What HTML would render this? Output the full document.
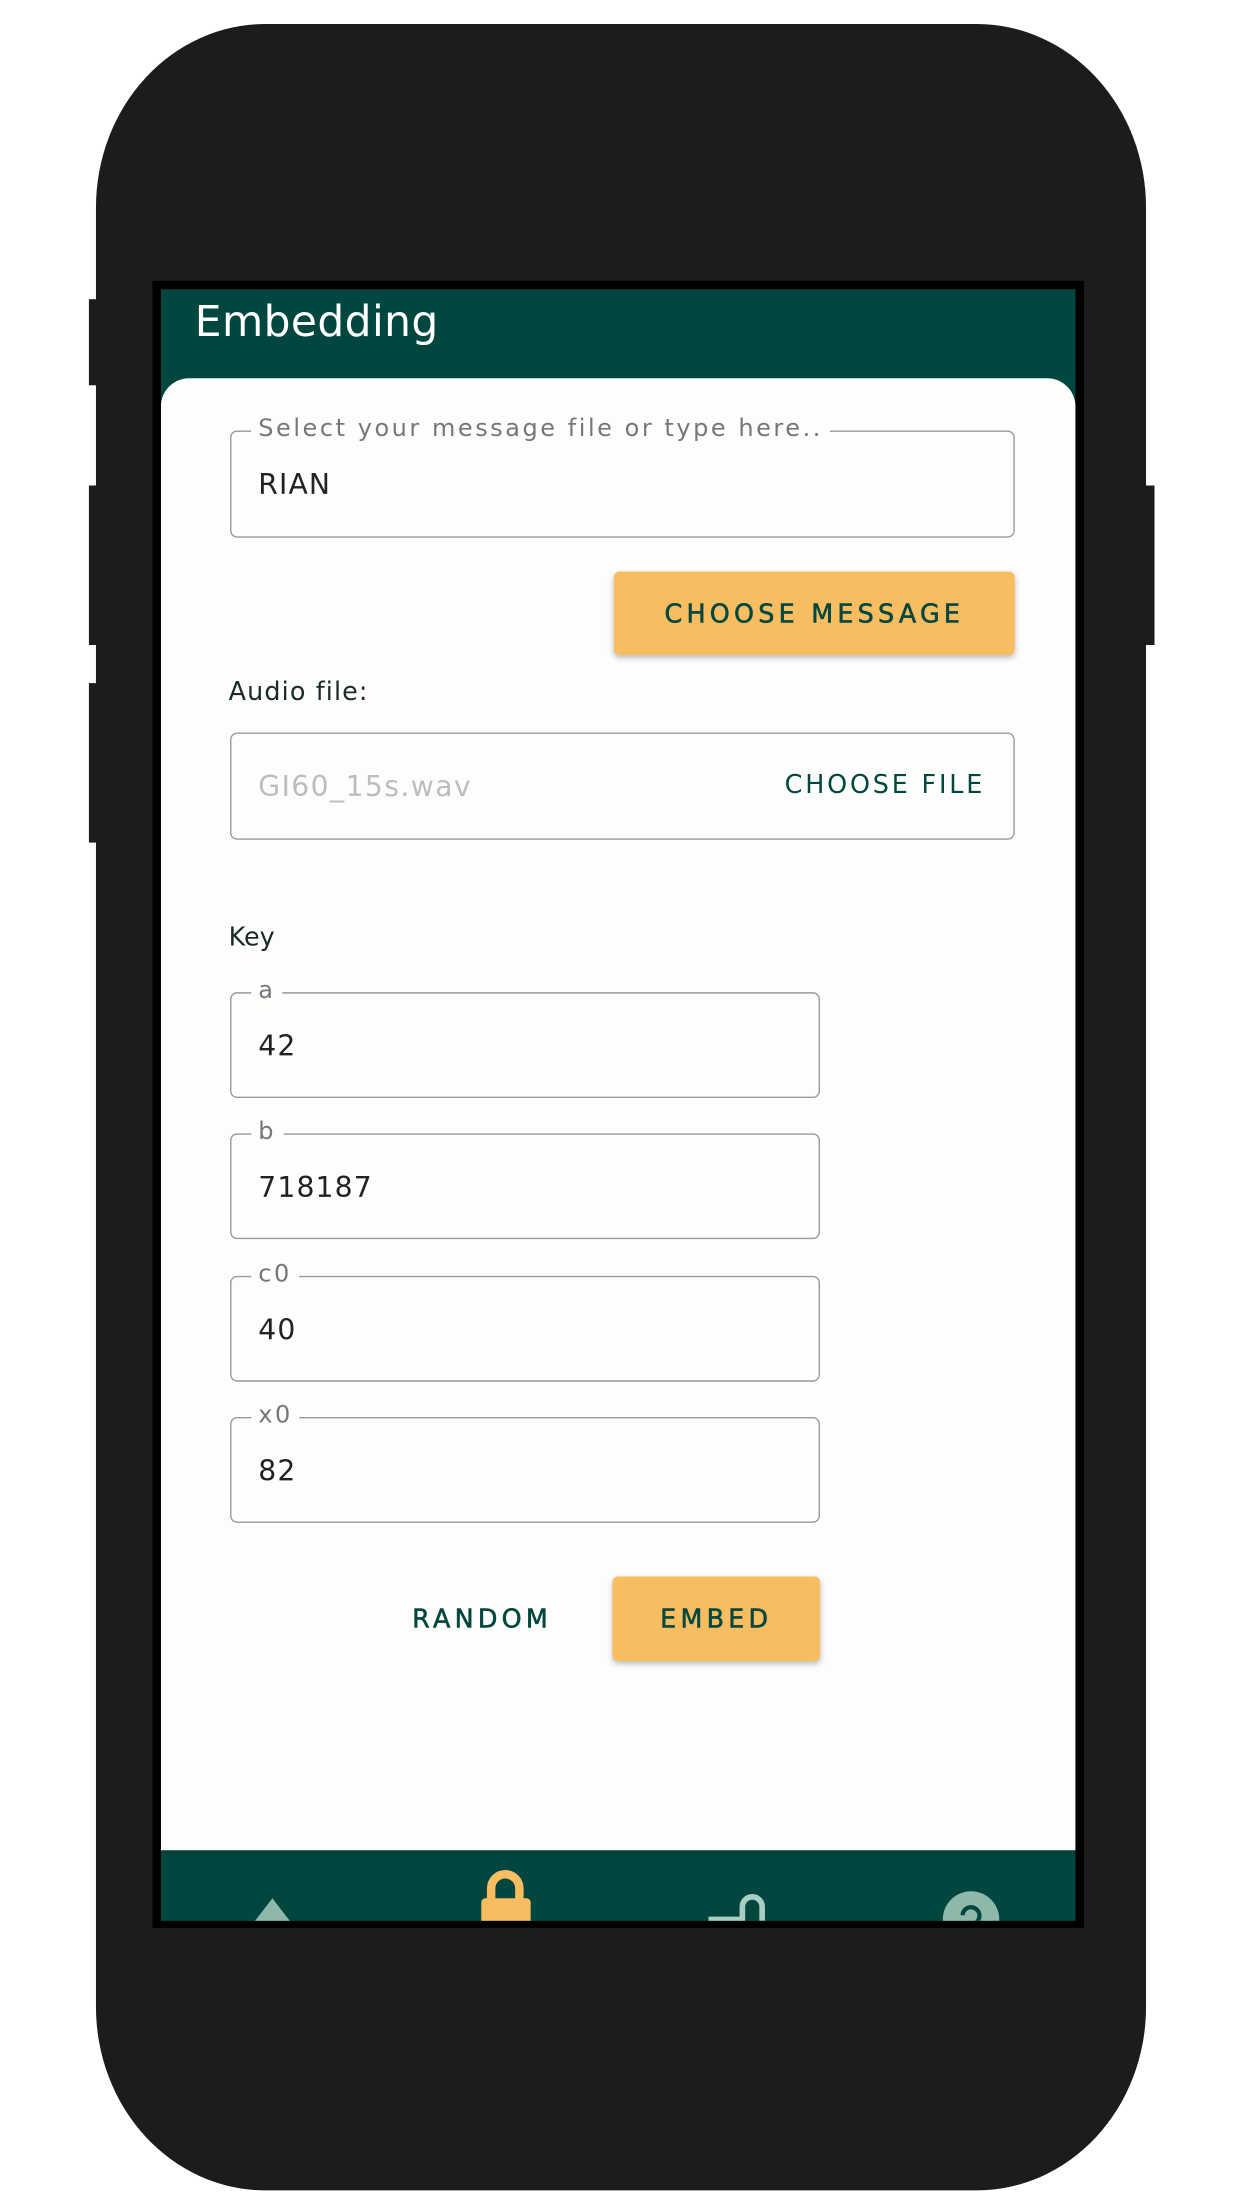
<!DOCTYPE html>
<html><head><meta charset="utf-8"><style>
html,body{margin:0;padding:0;background:#fff;width:1242px;height:2208px;overflow:hidden}
#w{position:absolute;left:0;top:0;width:880px;height:1564px;transform:scale(1.41136);transform-origin:0 0;font-family:"DejaVu Sans",sans-serif}
.a{position:absolute;white-space:nowrap}
.fld{position:absolute;border:1.5px solid #9a9a9a;border-radius:5px;box-sizing:border-box}
.lbl{position:absolute;top:-12px;left:14px;background:#fdfdfb;padding:0 5px;color:#777;font-size:17px;line-height:21px;letter-spacing:1.8px;white-space:nowrap}
.val{position:absolute;left:19px;top:25px;font-size:20px;color:#222;letter-spacing:0.8px;white-space:nowrap}
.btn{position:absolute;background:#f8bd60;border-radius:4px;box-shadow:0 2px 4px rgba(0,0,0,.25);color:#02473f;font-size:18px;letter-spacing:3px;text-align:center;-webkit-text-stroke:0.4px #02473f}
</style></head><body><div id="w">
<div class="a" style="left:63px;top:212px;width:8px;height:61px;background:#1c1c1c"></div>
<div class="a" style="left:63px;top:344px;width:8px;height:113px;background:#1c1c1c"></div>
<div class="a" style="left:63px;top:484px;width:8px;height:113px;background:#1c1c1c"></div>
<div class="a" style="left:809px;top:344px;width:9px;height:113px;background:#1c1c1c"></div>
<div class="a" style="left:68px;top:17px;width:744px;height:1535px;background:#1c1c1c;border-radius:120px/130px"></div>
<div class="a" style="left:108px;top:199px;width:660px;height:1167px;background:#000"></div>
<div class="a" style="left:114px;top:205px;width:648px;height:1156px;background:#02473f;overflow:hidden">
  <div class="a" style="left:24px;top:6px;color:#fff;font-size:30px;letter-spacing:0.3px">Embedding</div>
  <div class="a" style="left:0;top:63px;width:648px;height:1043px;background:#fdfdfb;border-radius:20px 20px 0 0;box-shadow:0 2px 3px rgba(0,0,0,.15)"></div>
  <svg class="a" style="left:0;top:1110px" width="648" height="46">
    <polygon points="79,30 59,56 99,56" fill="#8fb8ad"/>
    <path d="M234,32 V23 a10,10 0 0 1 20,0 V32" stroke="#f8bd60" stroke-width="6" fill="none"/>
    <rect x="227" y="30" width="35" height="26" rx="3" fill="#f8bd60"/>
    <path d="M412,46 V36 a7,7 0 0 1 14,0 V46" stroke="#a9cfc4" stroke-width="4" fill="none"/>
    <rect x="388" y="43" width="24" height="5" fill="#a9cfc4"/>
    <circle cx="574" cy="45" r="20" fill="#8fb8ad"/>
    <path d="M568,42 a6,6 0 1 1 8,6 v4" stroke="#02473f" stroke-width="3" fill="none"/>
  </svg>
</div>
<div class="fld" style="left:163px;top:305px;width:556px;height:76px"><div class="lbl">Select your message file or type here..</div><div class="val">RIAN</div></div>
<div class="btn" style="left:435px;top:405px;width:284px;height:59px;line-height:61px">CHOOSE MESSAGE</div>
<div class="a" style="left:162px;top:480px;font-size:18px;color:#1a2a28;letter-spacing:0.8px">Audio file:</div>
<div class="fld" style="left:163px;top:519px;width:556px;height:76px"><div class="val" style="color:#bdbdbd;letter-spacing:1px">GI60_15s.wav</div><div class="a" style="right:20px;top:26px;font-size:18px;letter-spacing:2px;color:#02473f">CHOOSE FILE</div></div>
<div class="a" style="left:162px;top:654px;font-size:18px;color:#1a2a28">Key</div>
<div class="fld" style="left:163px;top:703px;width:418px;height:75px"><div class="lbl">a</div><div class="val">42</div></div>
<div class="fld" style="left:163px;top:803px;width:418px;height:75px"><div class="lbl">b</div><div class="val">718187</div></div>
<div class="fld" style="left:163px;top:904px;width:418px;height:75px"><div class="lbl">c0</div><div class="val">40</div></div>
<div class="fld" style="left:163px;top:1004px;width:418px;height:75px"><div class="lbl">x0</div><div class="val">82</div></div>
<div class="a" style="left:292px;top:1137px;font-size:18px;letter-spacing:3px;color:#02473f;-webkit-text-stroke:0.4px #02473f">RANDOM</div>
<div class="btn" style="left:434px;top:1117px;width:147px;height:60px;line-height:62px">EMBED</div>
</div></body></html>
